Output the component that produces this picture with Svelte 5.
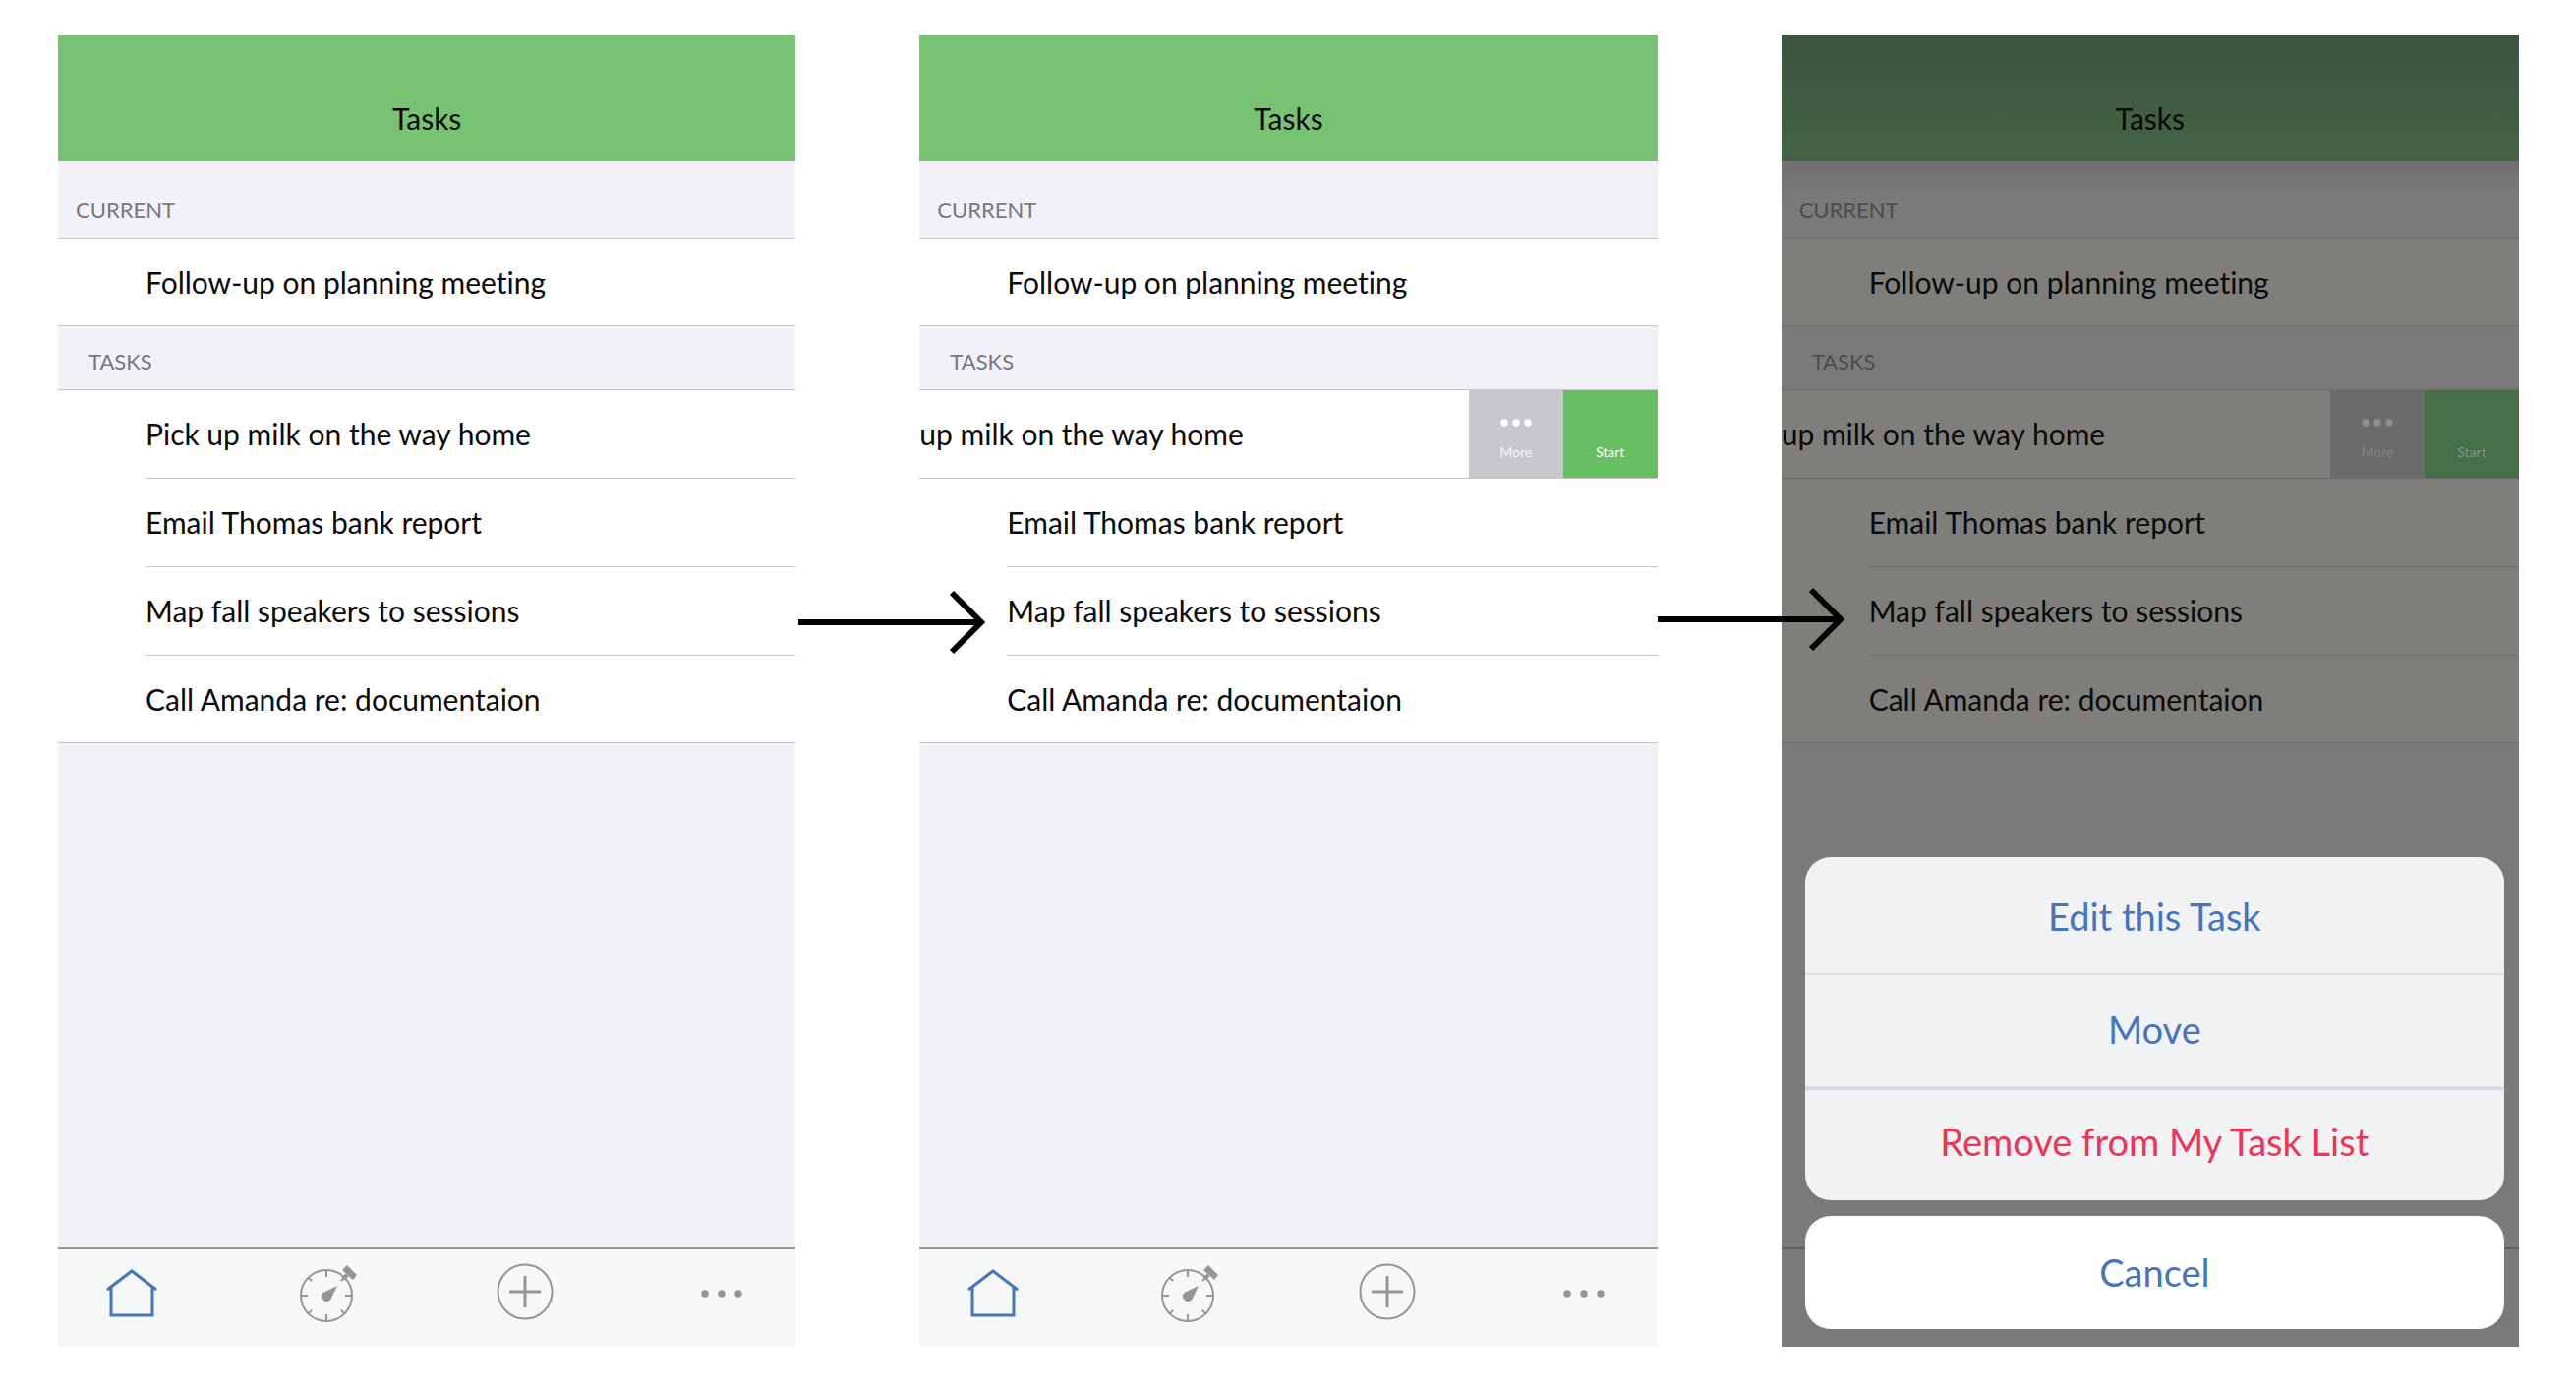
<script>
  const tasks = [
    'Pick up milk on the way home',
    'Email Thomas bank report',
    'Map fall speakers to sessions',
    'Call Amanda re: documentaion'
  ];

  // The swiped row has slid left past its first word.
  const swipedTask = 'up milk on the way home';

  const screens = [
    { id: 'list', swiped: false, sheet: false, arrow: 'first' },
    { id: 'swipe', swiped: true, sheet: false, arrow: 'second' },
    { id: 'menu', swiped: true, sheet: true, arrow: '' }
  ];

  const ticks = [0, 45, 90, 135, 180, 225, 270, 315];
</script>

{#snippet arrow(kind)}
  <svg class="arrow {kind}" viewBox="0 0 190 66" aria-hidden="true">
    <path d="M0 33H186" />
    <path d="M156 3L186 33L156 63" />
  </svg>
{/snippet}

{#snippet tabs()}
  <nav class="tabs" aria-label="Main">
    <button type="button" class="tab active" aria-label="Home">
      <svg viewBox="0 0 60 60">
        <path d="M9 23V52H51V23" />
        <path d="M5 26L30 7L55 26" />
      </svg>
    </button>
    <button type="button" class="tab" aria-label="Timer">
      <svg viewBox="2 0 60 60">
        <circle cx="30" cy="32" r="26" stroke-width="2" />
        {#each ticks as angle}
          <path
            d={angle % 90 === 0 ? 'M30 6V13' : 'M30 6V11'}
            stroke-width="2"
            transform="rotate({angle} 30 32)"
          />
        {/each}
        <path d="M47 15L51 11" stroke-width="4" />
        <path class="solid" d="M51 1L61 11L57 16L46 6Z" />
        <path class="solid" d="M41 22L35 34.500A5.200 5.200 0 1 1 26.500 29Z" />
      </svg>
    </button>
    <button type="button" class="tab" aria-label="Add task">
      <svg viewBox="0 0 60 60">
        <circle cx="30" cy="28" r="27.500" stroke-width="2" />
        <path d="M14 28H46M30 12V44" stroke-width="3" />
      </svg>
    </button>
    <button type="button" class="tab" aria-label="More options">
      <svg viewBox="0 0 60 60">
        <circle class="solid" cx="13" cy="30" r="3.700" />
        <circle class="solid" cx="30" cy="30" r="3.700" />
        <circle class="solid" cx="47" cy="30" r="3.700" />
      </svg>
    </button>
  </nav>
{/snippet}

<main>
  {#each screens as screen (screen.id)}
    <section class="screen" class:dim={screen.sheet}>
      <header><h1>Tasks</h1></header>

      <h2 class="current">Current</h2>
      <ul>
        <li class="row"><span>Follow-up on planning meeting</span></li>
      </ul>

      <h2 class="list">Tasks</h2>
      <ul>
        {#each tasks as task, i}
          {#if i === 0 && screen.swiped}
            <li class="row swiped">
              <span>{swipedTask}</span>
              <div class="actions">
                <button type="button" class="more">
                  <svg viewBox="0 0 32 8" aria-hidden="true">
                    <circle cx="4" cy="4" r="3.700" />
                    <circle cx="16" cy="4" r="3.700" />
                    <circle cx="28" cy="4" r="3.700" />
                  </svg>
                  More
                </button>
                <button type="button" class="start">Start</button>
              </div>
            </li>
          {:else}
            <li class="row"><span>{task}</span></li>
          {/if}
        {/each}
      </ul>

      <div class="space"></div>
      {@render tabs()}

      {#if screen.sheet}
        <div class="sheet" role="dialog" aria-label="Task actions">
          <div class="group">
            <button type="button">Edit this Task</button>
            <button type="button">Move</button>
            <button type="button" class="danger">Remove from My Task List</button>
          </div>
          <button type="button" class="cancel">Cancel</button>
        </div>
      {/if}

      {#if screen.arrow}
        {@render arrow(screen.arrow)}
      {/if}
    </section>
  {/each}
</main>

<style>
  :global(body) {
    margin: 0;
    background: #fff;
  }

  main {
    box-sizing: border-box;
    min-height: 100vh;
    padding: 36px 58px 43px 59px;
    display: grid;
    grid-template-columns: repeat(3, minmax(0, 1fr));
    column-gap: 126px;
    font-family: Lato, 'Open Sans', sans-serif;
    font-variant-ligatures: none;
    color: #0a0a0a;
  }

  .screen {
    --header: #77c372;
    --section: #f2f1f7;
    --section-top: #f2f1f7;
    --row: #fff;
    --line: #c8c7cc;
    --caption: #77777b;
    --bar: #f6f8f7;
    --bar-line: #959595;
    --more: #c8c7cc;
    --start: #68be62;
    --action-text: #fff;
    --more-text: #f4f4f6;
    position: relative;
    display: flex;
    flex-direction: column;
    background: var(--section);
  }

  .dim {
    --header: linear-gradient(#3b553e, #446345);
    --section: #7b797a;
    --section-top: linear-gradient(#727071, #7b797a 50%);
    --row: #7f7e7b;
    --line: #6d6c6d;
    --caption: #4b4c4d;
    --bar: #7b797a;
    --bar-line: #615f60;
    --more: #6b6b6b;
    --start: #446f47;
    --action-text: #8b918b;
    --more-text: #838383;
  }

  header {
    height: 128px;
    box-sizing: border-box;
    padding-bottom: 24px;
    display: flex;
    align-items: flex-end;
    justify-content: center;
    background: var(--header);
  }

  h1,
  h2 {
    margin: 0;
    font-weight: 400;
  }

  h1 {
    font-size: 30px;
    line-height: 40px;
  }

  h2 {
    box-sizing: border-box;
    display: flex;
    align-items: flex-end;
    padding-bottom: 14px;
    border-bottom: 1px solid var(--line);
    font-size: 22px;
    line-height: 28px;
    text-transform: uppercase;
    color: var(--caption);
  }

  .current {
    height: 79px;
    padding-left: 18px;
    background: var(--section-top);
  }

  .list {
    height: 65px;
    padding-left: 31px;
    background: var(--section);
  }

  ul {
    margin: 0;
    padding: 0;
    list-style: none;
    border-bottom: 1px solid var(--line);
    background: var(--row);
  }

  .row {
    box-sizing: border-box;
    height: 90px;
    padding-left: 89px;
    display: flex;
    font-size: 30px;
    line-height: 88px;
    white-space: nowrap;
  }

  .row:last-child {
    height: 88px;
  }

  .row span {
    flex: 1;
  }

  .row:not(:last-child) span {
    border-bottom: 1px solid var(--line);
  }

  .row.swiped {
    padding-left: 0;
    border-bottom: 1px solid var(--line);
  }

  .row.swiped span {
    border-bottom: 0;
  }

  .actions {
    display: flex;
  }

  button {
    margin: 0;
    padding: 0;
    border: 0;
    background: none;
    color: inherit;
    font: inherit;
    font-variant-ligatures: none;
    cursor: pointer;
  }

  .actions button {
    box-sizing: border-box;
    width: 96px;
    padding-bottom: 16px;
    display: flex;
    flex-direction: column;
    align-items: center;
    justify-content: flex-end;
    gap: 16px;
    font-size: 14px;
    line-height: 20px;
    color: var(--action-text);
  }

  .actions .more {
    background: var(--more);
    color: var(--more-text);
  }

  .actions .start {
    background: var(--start);
  }

  .more svg {
    width: 32px;
    height: 8px;
    fill: var(--action-text);
  }

  .space {
    flex: 1;
  }

  .tabs {
    height: 99px;
    padding: 0 25px;
    display: flex;
    justify-content: space-between;
    border-top: 2px solid var(--bar-line);
    background: var(--bar);
  }

  .tab {
    width: 100px;
    padding-top: 15px;
    display: flex;
    align-items: flex-start;
    justify-content: center;
    color: #959595;
  }

  .tab svg {
    width: 60px;
    height: 60px;
    overflow: visible;
    fill: none;
    stroke: currentColor;
  }

  .tab .solid {
    fill: currentColor;
    stroke: none;
  }

  .tab.active {
    color: #4475bd;
  }

  .tab.active svg {
    stroke-width: 3;
  }

  .arrow {
    position: absolute;
    z-index: 2;
    left: 100%;
    width: 190px;
    height: 66px;
    fill: none;
    stroke: #000;
    stroke-width: 6;
  }

  .arrow.first {
    top: 564px;
    margin-left: 3px;
  }

  .arrow.second {
    top: 561px;
  }

  .sheet {
    position: absolute;
    left: 24px;
    right: 15px;
    bottom: 18px;
    display: flex;
    flex-direction: column;
    gap: 16px;
    font-size: 38px;
    line-height: 48px;
    color: #4475bd;
  }

  .group {
    display: flex;
    flex-direction: column;
    border-radius: 26px;
    overflow: hidden;
    background: #f0f2f4;
  }

  .group button {
    height: 120px;
    padding-top: 2px;
    border-bottom: 2px solid #e0e1e5;
  }

  .group button:nth-child(2) {
    height: 117px;
    padding: 0 0 4px;
    border-bottom: 4px solid #dadae0;
  }

  .group .danger {
    height: 112px;
    padding: 0 0 8px;
    border-bottom: 0;
    color: #ee3557;
  }

  .cancel {
    height: 115px;
    padding-bottom: 2px;
    border-radius: 26px;
    background: #fff;
  }
</style>
